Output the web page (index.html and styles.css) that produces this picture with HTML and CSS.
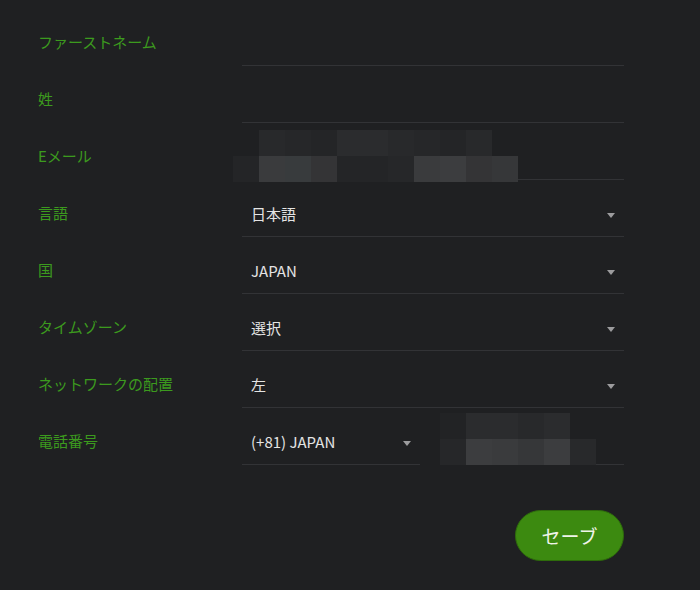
FILE: index.html
```html
<!DOCTYPE html>
<html lang="ja">
<head>
  <meta charset="UTF-8">
  <title>プロフィール</title>
  <link rel="stylesheet" href="styles.css">
</head>
<body>

  <form class="profile">
    <div class="row">
      <label class="label">ファーストネーム</label>
      <div class="field"></div>
    </div>

    <div class="row">
      <label class="label">姓</label>
      <div class="field"></div>
    </div>

    <div class="row">
      <label class="label">Eメール</label>
      <div class="field">
        <div class="mosaic mail">
          <div class="line top">
            <span class="s3"></span><span class="s2"></span><span class="s1"></span><span class="s4 w2"></span><span class="s3"></span><span class="s2"></span><span class="s1"></span><span class="s3"></span>
          </div>
          <div class="line">
            <span class="s1"></span><span class="l2"></span><span class="l3"></span><span class="l1"></span><span class="s1 w2"></span><span class="s2"></span><span class="l2"></span><span class="l4"></span><span class="l1"></span><span class="l5"></span>
          </div>
        </div>
      </div>
    </div>

    <div class="row">
      <label class="label">言語</label>
      <div class="field select">
        <span class="value">日本語</span>
        <span class="caret"></span>
      </div>
    </div>

    <div class="row">
      <label class="label">国</label>
      <div class="field select">
        <span class="value">JAPAN</span>
        <span class="caret"></span>
      </div>
    </div>

    <div class="row">
      <label class="label">タイムゾーン</label>
      <div class="field select">
        <span class="value">選択</span>
        <span class="caret"></span>
      </div>
    </div>

    <div class="row">
      <label class="label">ネットワークの配置</label>
      <div class="field select">
        <span class="value">左</span>
        <span class="caret"></span>
      </div>
    </div>

    <div class="row">
      <label class="label">電話番号</label>
      <div class="phone">
        <div class="field select code">
          <span class="value">(+81) JAPAN</span>
          <span class="caret"></span>
        </div>
        <div class="field number">
          <div class="mosaic tel">
            <div class="line top">
              <span class="s0"></span><span class="s4"></span><span class="s4"></span><span class="s3"></span><span class="s4"></span>
            </div>
            <div class="line">
              <span class="s2"></span><span class="l4"></span><span class="l2"></span><span class="l5"></span><span class="l4"></span><span class="s3"></span>
            </div>
          </div>
        </div>
      </div>
    </div>

    <div class="actions">
      <button type="button" class="save-btn">セーブ</button>
    </div>
  </form>

</body>
</html>
```

FILE: styles.css
```css
* { box-sizing: border-box; }

body {
  margin: 0;
  background: #1f2022;
  font-family: "Noto Sans CJK JP", "Noto Sans", sans-serif;
  color: #e4e4e4;
}

.profile {
  width: 624px;
  padding: 9px 0 0 38px;
}

.row {
  display: grid;
  grid-template-columns: 204px 382px;
  height: 57px;
}

.label {
  align-self: end;
  padding-bottom: 14px;
  font-size: 15px;
  line-height: 20px;
  color: #3c9a1e;
}

.field {
  position: relative;
  display: flex;
  align-items: flex-end;
  justify-content: space-between;
  padding: 0 9px 12px;
  border-bottom: 1px solid #323336;
}

.value {
  font-size: 15px;
  line-height: 20px;
}

.caret {
  width: 0;
  height: 0;
  margin-bottom: 6px;
  border-left: 4px solid transparent;
  border-right: 4px solid transparent;
  border-top: 5px solid #9c9c9e;
}

.phone {
  display: grid;
  grid-template-columns: 178px 184px;
  gap: 20px;
}

/* pixelated blur over private data */
.mosaic {
  position: absolute;
  display: flex;
  flex-direction: column;
}

.mosaic.mail {
  left: -9px;
  top: 7px;
}

.mosaic.tel {
  left: 0;
  top: 5px;
}

.mosaic .line {
  display: flex;
  height: 26px;
}

.mosaic.mail .line.top {
  padding-left: 26px;
}

.mosaic span {
  width: 26px;
  height: 100%;
}

.mosaic span.w2 { width: 51px; }

.s0 { background: #222325; }
.s1 { background: #242527; }
.s2 { background: #262729; }
.s3 { background: #28292b; }
.s4 { background: #2b2c2e; }
.l1 { background: #343436; }
.l2 { background: #3a3b3d; }
.l3 { background: #383b3d; }
.l4 { background: #3c3d3f; }
.l5 { background: #363739; }

.actions {
  display: flex;
  justify-content: flex-end;
  margin-top: 45px;
}

.save-btn {
  width: 109px;
  height: 51px;
  border: 1px solid #2e6c0b;
  border-radius: 26px;
  background: #3c8a10;
  color: #eef4e8;
  font-family: inherit;
  font-size: 19px;
  cursor: pointer;
}
```
